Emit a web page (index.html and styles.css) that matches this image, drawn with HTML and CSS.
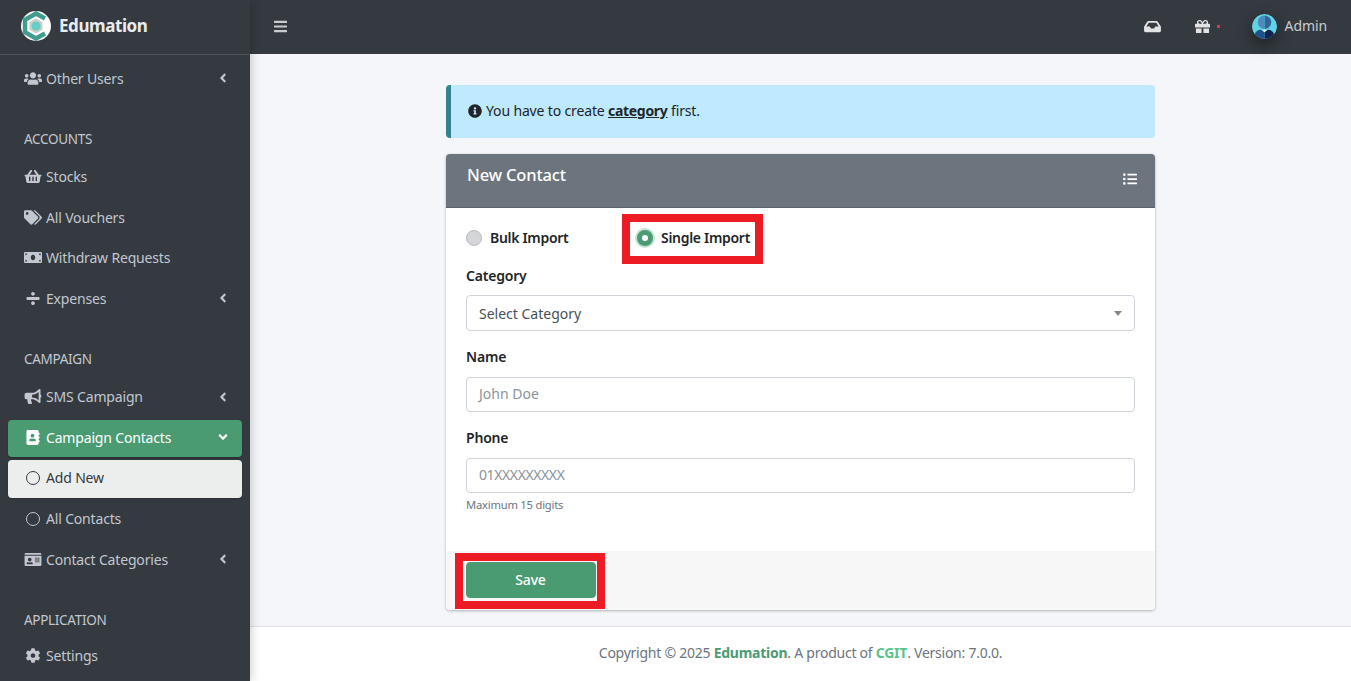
FILE: index.html
```html
<!DOCTYPE html>
<html lang="en">
<head>
<meta charset="utf-8">
<title>New Contact - Edumation</title>
<link rel="stylesheet" href="styles.css">
</head>
<body>
<svg class="defs" aria-hidden="true">
<symbol id="i-users" viewBox="0 0 640 512"><path d="M96 224c35.3 0 64-28.7 64-64s-28.7-64-64-64-64 28.7-64 64 28.7 64 64 64zm448 0c35.3 0 64-28.7 64-64s-28.7-64-64-64-64 28.7-64 64 28.7 64 64 64zm32 32h-64c-17.6 0-33.5 7.1-45.1 18.6 40.3 22.1 68.9 62 75.1 109.4h66c17.7 0 32-14.3 32-32v-32c0-35.3-28.7-64-64-64zm-256 0c61.9 0 112-50.1 112-112S381.9 32 320 32 208 82.1 208 144s50.1 112 112 112zm76.8 32h-8.3c-20.8 10-43.9 16-68.5 16s-47.6-6-68.5-16h-8.3C179.6 288 128 339.6 128 403.2V432c0 26.5 21.5 48 48 48h288c26.5 0 48-21.5 48-48v-28.8c0-63.6-51.6-115.2-115.2-115.2zm-223.7-13.4C161.5 263.1 145.6 256 128 256H64c-35.3 0-64 28.7-64 64v32c0 17.7 14.3 32 32 32h65.9c6.3-47.4 34.9-87.3 75.2-109.4z"/></symbol>
<symbol id="i-basket" viewBox="0 0 576 512"><path d="M576 216v16c0 13.255-10.745 24-24 24h-8l-26.113 182.788C514.509 462.435 494.257 480 470.37 480H105.63c-23.887 0-44.139-17.565-47.518-41.212L32 256h-8c-13.255 0-24-10.745-24-24v-16c0-13.255 10.745-24 24-24h67.341l106.78-146.821c10.395-14.292 30.407-17.453 44.701-7.058 14.293 10.395 17.453 30.408 7.058 44.701L170.477 192h235.046L326.12 82.821c-10.395-14.292-7.234-34.306 7.059-44.701 14.291-10.395 34.306-7.235 44.701 7.058L484.659 192H552c13.255 0 24 10.745 24 24zM312 392V280c0-13.255-10.745-24-24-24s-24 10.745-24 24v112c0 13.255 10.745 24 24 24s24-10.745 24-24zm112 0V280c0-13.255-10.745-24-24-24s-24 10.745-24 24v112c0 13.255 10.745 24 24 24s24-10.745 24-24zm-224 0V280c0-13.255-10.745-24-24-24s-24 10.745-24 24v112c0 13.255 10.745 24 24 24s24-10.745 24-24z"/></symbol>
<symbol id="i-tags" viewBox="0 0 640 512"><path d="M497.941 225.941L286.059 14.059A48 48 0 0 0 252.118 0H48C21.49 0 0 21.49 0 48v204.118a48 48 0 0 0 14.059 33.941l211.882 211.882c18.744 18.745 49.136 18.746 67.882 0l204.118-204.118c18.745-18.745 18.745-49.137 0-67.882zM112 160c-26.51 0-48-21.49-48-48s21.49-48 48-48 48 21.49 48 48-21.49 48-48 48zm513.941 133.823L421.823 497.941c-18.745 18.745-49.137 18.745-67.882 0l-.36-.36L527.64 323.522c16.999-16.999 26.36-39.6 26.36-63.64s-9.362-46.641-26.36-63.64L331.397 0h48.721a48 48 0 0 1 33.941 14.059l211.882 211.882c18.745 18.745 18.745 49.137 0 67.882z"/></symbol>
<symbol id="i-money" viewBox="0 0 640 512"><path d="M608 64H32C14.33 64 0 78.33 0 96v320c0 17.67 14.33 32 32 32h576c17.67 0 32-14.33 32-32V96c0-17.67-14.33-32-32-32zM48 400v-64c35.35 0 64 28.65 64 64H48zm0-224v-64h64c0 35.35-28.65 64-64 64zm272 176c-44.19 0-80-42.99-80-96 0-53.02 35.82-96 80-96s80 42.98 80 96c0 53.03-35.83 96-80 96zm272 48h-64c0-35.35 28.65-64 64-64v64zm0-224c-35.35 0-64-28.65-64-64h64v64z"/></symbol>
<symbol id="i-divide" viewBox="0 0 448 512"><path d="M224 352c-35.35 0-64 28.65-64 64s28.65 64 64 64 64-28.65 64-64-28.65-64-64-64zm0-192c35.35 0 64-28.65 64-64s-28.65-64-64-64-64 28.65-64 64 28.65 64 64 64zm192 48H32c-17.67 0-32 14.33-32 32v32c0 17.67 14.33 32 32 32h384c17.67 0 32-14.33 32-32v-32c0-17.67-14.33-32-32-32z"/></symbol>
<symbol id="i-bullhorn" viewBox="0 0 576 512"><path d="M576 240c0-23.63-12.95-44.04-32-55.12V32.01C544 23.26 537.02 0 512 0c-7.12 0-14.19 2.38-19.98 7.02l-85.03 68.03C364.28 109.19 310.66 128 256 128H64c-35.35 0-64 28.65-64 64v96c0 35.35 28.65 64 64 64h33.7c-1.39 10.48-2.18 21.14-2.18 32 0 39.77 9.26 77.35 25.56 110.94 5.19 10.69 16.52 17.06 28.4 17.06h74.28c26.05 0 41.69-29.84 25.9-50.56-16.4-21.52-26.15-48.36-26.15-77.44 0-11.11 1.62-21.79 4.41-32H256c54.66 0 108.28 18.81 150.98 52.95l85.03 68.03a32.023 32.023 0 0 0 19.98 7.02c24.92 0 32-22.78 32-32V295.13C563.05 284.04 576 263.63 576 240zm-96 141.42l-33.05-26.44C392.95 311.78 325.12 288 256 288v-96c69.12 0 136.95-23.78 190.95-66.98L480 98.58v282.84z"/></symbol>
<symbol id="i-book" viewBox="0 0 448 512"><path d="M436 160c6.6 0 12-5.4 12-12v-40c0-6.6-5.4-12-12-12h-20V48c0-26.5-21.5-48-48-48H48C21.5 0 0 21.5 0 48v416c0 26.5 21.5 48 48 48h320c26.5 0 48-21.5 48-48v-48h20c6.6 0 12-5.4 12-12v-40c0-6.6-5.4-12-12-12h-20v-64h20c6.6 0 12-5.4 12-12v-40c0-6.6-5.4-12-12-12h-20v-64h20zm-228-32c35.3 0 64 28.7 64 64s-28.7 64-64 64-64-28.7-64-64 28.7-64 64-64zm112 236.8c0 10.6-10 19.2-22.4 19.2H118.4C106 384 96 375.4 96 364.8v-19.2c0-31.8 30.1-57.6 67.2-57.6h5c12.3 5.1 25.7 8 39.8 8s27.6-2.9 39.8-8h5c37.1 0 67.2 25.8 67.2 57.6v19.2z"/></symbol>
<symbol id="i-card" viewBox="0 0 576 512"><path d="M528 32H48C21.5 32 0 53.5 0 80v16h576V80c0-26.5-21.5-48-48-48zM0 432c0 26.5 21.5 48 48 48h480c26.5 0 48-21.5 48-48V128H0v304zm352-232c0-4.4 3.6-8 8-8h144c4.4 0 8 3.6 8 8v16c0 4.4-3.6 8-8 8H360c-4.4 0-8-3.6-8-8v-16zm0 64c0-4.4 3.6-8 8-8h144c4.4 0 8 3.6 8 8v16c0 4.4-3.6 8-8 8H360c-4.4 0-8-3.6-8-8v-16zm0 64c0-4.4 3.6-8 8-8h144c4.4 0 8 3.6 8 8v16c0 4.4-3.6 8-8 8H360c-4.4 0-8-3.6-8-8v-16zM176 192c35.3 0 64 28.7 64 64s-28.7 64-64 64-64-28.7-64-64 28.7-64 64-64zM67.1 396.2C75.5 370.5 99.6 352 128 352h8.2c12.3 5.1 25.7 8 39.8 8s27.6-2.9 39.8-8h8.2c28.4 0 52.5 18.5 60.9 44.2 3.2 9.9-5.2 19.8-15.6 19.8H82.7c-10.4 0-18.8-10-15.6-19.8z"/></symbol>
<symbol id="i-cog" viewBox="0 0 512 512"><path d="M487.4 315.7l-42.6-24.6c4.3-23.2 4.3-47 0-70.2l42.6-24.6c4.9-2.8 7.1-8.6 5.5-14-11.1-35.6-30-67.8-54.7-94.6-3.8-4.1-10-5.1-14.8-2.3L380.8 110c-17.9-15.4-38.5-27.3-60.8-35.1V25.8c0-5.6-3.9-10.5-9.4-11.7-36.7-8.2-74.3-7.8-109.2 0-5.5 1.2-9.4 6.1-9.4 11.7V75c-22.2 7.9-42.8 19.8-60.8 35.1L88.7 85.5c-4.9-2.8-11-1.9-14.8 2.3-24.7 26.7-43.6 58.9-54.7 94.6-1.7 5.4.6 11.2 5.5 14L67.3 221c-4.3 23.2-4.3 47 0 70.2l-42.6 24.6c-4.9 2.8-7.1 8.6-5.5 14 11.1 35.6 30 67.8 54.7 94.6 3.8 4.1 10 5.1 14.8 2.3l42.6-24.6c17.9 15.4 38.5 27.3 60.8 35.1v49.2c0 5.6 3.9 10.5 9.4 11.7 36.7 8.2 74.3 7.8 109.2 0 5.5-1.2 9.4-6.1 9.4-11.7v-49.2c22.2-7.9 42.8-19.8 60.8-35.1l42.6 24.6c4.9 2.8 11 1.9 14.8-2.3 24.7-26.7 43.6-58.9 54.7-94.6 1.5-5.5-.7-11.3-5.6-14.1zM256 336c-44.1 0-80-35.9-80-80s35.9-80 80-80 80 35.9 80 80-35.9 80-80 80z"/></symbol>
<symbol id="i-bars" viewBox="0 0 448 512"><path d="M16 132h416c8.837 0 16-7.163 16-16V76c0-8.837-7.163-16-16-16H16C7.163 60 0 67.163 0 76v40c0 8.837 7.163 16 16 16zm0 160h416c8.837 0 16-7.163 16-16v-40c0-8.837-7.163-16-16-16H16c-8.837 0-16 7.163-16 16v40c0 8.837 7.163 16 16 16zm0 160h416c8.837 0 16-7.163 16-16v-40c0-8.837-7.163-16-16-16H16c-8.837 0-16 7.163-16 16v40c0 8.837 7.163 16 16 16z"/></symbol>
<symbol id="i-inbox" viewBox="0 0 576 512"><path d="M567.938 243.908L462.25 85.374A48.003 48.003 0 0 0 422.311 64H153.689a48 48 0 0 0-39.938 21.374L8.062 243.908A47.994 47.994 0 0 0 0 270.533V400c0 26.51 21.49 48 48 48h480c26.51 0 48-21.49 48-48V270.533a47.994 47.994 0 0 0-8.062-26.625zM162.252 128h251.497l85.333 128H376l-32 64H232l-32-64H76.918l85.334-128z"/></symbol>
<symbol id="i-gift" viewBox="0 0 512 512"><path d="M32 448c0 17.7 14.3 32 32 32h160V320H32v128zm256 32h160c17.7 0 32-14.3 32-32V320H288v160zm192-320h-42.1c6.2-12.1 10.1-25.5 10.1-40 0-48.5-39.5-88-88-88-41.6 0-68.5 21.3-103 68.3-34.5-47-61.4-68.3-103-68.3-48.5 0-88 39.5-88 88 0 14.5 3.8 27.9 10.1 40H32c-17.7 0-32 14.3-32 32v80c0 8.8 7.2 16 16 16h480c8.8 0 16-7.2 16-16v-80c0-17.7-14.3-32-32-32zm-326.1 0c-22.1 0-40-17.9-40-40s17.9-40 40-40c19.9 0 34.6 3.3 86.1 80h-86.1zm206.1 0h-86.1c51.4-76.5 65.7-80 86.1-80 22.1 0 40 17.9 40 40s-17.9 40-40 40z"/></symbol>
<symbol id="i-list" viewBox="0 0 512 512"><path d="M48 48a48 48 0 1 0 48 48 48 48 0 0 0-48-48zm0 160a48 48 0 1 0 48 48 48 48 0 0 0-48-48zm0 160a48 48 0 1 0 48 48 48 48 0 0 0-48-48zm448 16H176a16 16 0 0 0-16 16v32a16 16 0 0 0 16 16h320a16 16 0 0 0 16-16v-32a16 16 0 0 0-16-16zm0-320H176a16 16 0 0 0-16 16v32a16 16 0 0 0 16 16h320a16 16 0 0 0 16-16V80a16 16 0 0 0-16-16zm0 160H176a16 16 0 0 0-16 16v32a16 16 0 0 0 16 16h320a16 16 0 0 0 16-16v-32a16 16 0 0 0-16-16z"/></symbol>
<symbol id="i-info" viewBox="0 0 512 512"><path d="M256 8C119.043 8 8 119.083 8 256c0 136.997 111.043 248 248 248s248-111.003 248-248C504 119.083 392.957 8 256 8zm0 110c23.196 0 42 18.804 42 42s-18.804 42-42 42-42-18.804-42-42 18.804-42 42-42zm56 254c0 6.627-5.373 12-12 12h-88c-6.627 0-12-5.373-12-12v-24c0-6.627 5.373-12 12-12h12v-64h-12c-6.627 0-12-5.373-12-12v-24c0-6.627 5.373-12 12-12h64c6.627 0 12 5.373 12 12v100h12c6.627 0 12 5.373 12 12v24z"/></symbol>
<symbol id="i-left" viewBox="0 0 256 512"><path d="M31.7 239l136-136c9.4-9.4 24.6-9.4 33.9 0l22.6 22.6c9.4 9.4 9.4 24.6 0 33.9L127.9 256l96.4 96.4c9.4 9.4 9.4 24.6 0 33.9L201.7 409c-9.4 9.4-24.6 9.4-33.9 0l-136-136c-9.5-9.4-9.5-24.6-.1-34z"/></symbol>
<symbol id="i-down" viewBox="0 0 320 512"><path d="M143 352.3L7 216.3c-9.4-9.4-9.4-24.6 0-33.9l22.6-22.6c9.4-9.4 24.6-9.4 33.9 0l96.4 96.4 96.4-96.4c9.4-9.4 24.6-9.4 33.9 0l22.6 22.6c9.4 9.4 9.4 24.6 0 33.9l-136 136c-9.2 9.4-24.4 9.4-33.8 0z"/></symbol>
</svg>

<div class="app">
  <aside class="sidebar">
    <div class="brand">
      <svg class="logo" viewBox="0 0 30 30">
        <circle cx="15" cy="15" r="15" fill="#fff"/>
        <path d="M24 7.500L15 2.500 4 8.800v12.400l11 6.300 9-5" fill="none" stroke="#3f9d90" stroke-width="4.500"/>
        <path d="M15 7.500l6.500 3.750v7.500L15 22.500l-6.500-3.750v-7.500z" fill="#c9cfc4"/>
        <circle cx="15" cy="15" r="4.500" fill="#62cfc8"/>
      </svg>
      <span class="brand-name">Edumation</span>
    </div>
    <nav class="menu">
      <a class="item"><svg class="ico"><use href="#i-users"/></svg><span class="label">Other Users</span><svg class="caret"><use href="#i-left"/></svg></a>
      <div class="section">ACCOUNTS</div>
      <a class="item"><svg class="ico"><use href="#i-basket"/></svg><span class="label">Stocks</span></a>
      <a class="item"><svg class="ico"><use href="#i-tags"/></svg><span class="label">All Vouchers</span></a>
      <a class="item"><svg class="ico"><use href="#i-money"/></svg><span class="label">Withdraw Requests</span></a>
      <a class="item"><svg class="ico"><use href="#i-divide"/></svg><span class="label">Expenses</span><svg class="caret"><use href="#i-left"/></svg></a>
      <div class="section">CAMPAIGN</div>
      <a class="item"><svg class="ico"><use href="#i-bullhorn"/></svg><span class="label">SMS Campaign</span><svg class="caret"><use href="#i-left"/></svg></a>
      <a class="item item-active"><svg class="ico"><use href="#i-book"/></svg><span class="label">Campaign Contacts</span><svg class="caret caret-down"><use href="#i-down"/></svg></a>
      <a class="item item-current"><span class="ring"></span><span class="label">Add New</span></a>
      <a class="item"><span class="ring"></span><span class="label">All Contacts</span></a>
      <a class="item"><svg class="ico"><use href="#i-card"/></svg><span class="label">Contact Categories</span><svg class="caret"><use href="#i-left"/></svg></a>
      <div class="section section-last">APPLICATION</div>
      <a class="item"><svg class="ico"><use href="#i-cog"/></svg><span class="label">Settings</span></a>
    </nav>
  </aside>

  <div class="main">
    <header class="navbar">
      <svg class="nav-bars"><use href="#i-bars"/></svg>
      <div class="nav-right">
        <svg class="nav-inbox"><use href="#i-inbox"/></svg>
        <span class="nav-gift"><svg class="nav-gift-ico"><use href="#i-gift"/></svg><i class="dot"></i></span>
        <span class="user">
          <svg class="avatar" viewBox="0 0 26 26">
            <defs><clipPath id="av"><circle cx="13" cy="13" r="13"/></clipPath></defs>
            <circle cx="13" cy="13" r="13" fill="#62d3e6"/>
            <g clip-path="url(#av)">
              <path d="M13 1.500a7 7 0 0 1 0 14z" fill="#2f6699"/>
              <path d="M13 1.500a7 7 0 0 0 0 14z" fill="#5089bb"/>
              <path d="M13 26h10v-4c0-3.500-3-5.500-6.500-5.500L13 19z" fill="#10264f"/>
              <path d="M13 26H3v-4c0-3.500 3-5.500 6.500-5.500L13 19z" fill="#1f5289"/>
              <path d="M10.500 16.500h5L13 19z" fill="#e8f4f8"/>
            </g>
          </svg>
          <span class="user-name">Admin</span>
        </span>
      </div>
    </header>

    <main class="content">
      <div class="column">
        <div class="alert">
          <svg class="alert-ico"><use href="#i-info"/></svg>
          <span>You have to create <a class="alert-link">category</a> first.</span>
        </div>
        <section class="card">
          <div class="card-head">
            <h3 class="card-title">New Contact</h3>
            <svg class="card-tool"><use href="#i-list"/></svg>
          </div>
          <div class="card-body">
            <div class="radios">
              <label class="radio radio-bulk"><span class="dot-off"></span>Bulk Import</label>
              <label class="radio radio-single"><span class="dot-on"></span>Single Import</label>
            </div>
            <div class="group">
              <div class="field-label">Category</div>
              <div class="control select">Select Category<i class="arrow"></i></div>
            </div>
            <div class="group">
              <div class="field-label">Name</div>
              <div class="control placeholder">John Doe</div>
            </div>
            <div class="group">
              <div class="field-label">Phone</div>
              <div class="control placeholder phone">01XXXXXXXXX</div>
              <div class="help">Maximum 15 digits</div>
            </div>
          </div>
          <div class="card-foot">
            <button class="btn-save" type="button">Save</button>
          </div>
        </section>
      </div>
    </main>

    <footer class="footer">
      <span class="footer-text">Copyright © 2025 <b class="f-brand">Edumation</b>. A product of <b class="f-cgit">CGIT</b>. Version: 7.0.0.</span>
    </footer>
  </div>
</div>
</body>
</html>
```

FILE: styles.css
```css
* { box-sizing: border-box; }
html, body { margin: 0; height: 100%; overflow: hidden; }
body {
  font-family: "Noto Sans", "Open Sans", sans-serif;
  font-size: 14px;
  color: #212529;
  background: #f4f6f9;
}
.defs { display: none; }
.app { display: flex; height: 681px; }

/* Sidebar */
.sidebar {
  width: 250px;
  flex: none;
  background: #343a40;
  box-shadow: 0 0 10px rgba(0,0,0,.25);
  position: relative;
  z-index: 2;
  overflow: hidden;
}
.brand {
  height: 55px;
  display: flex;
  align-items: center;
  padding-left: 21px;
  gap: 8px;
  border-bottom: 1px solid #4b545c;
}
.logo { width: 30px; height: 30px; margin-top: -2px; }
.brand-name { font-size: 17px; font-weight: 700; letter-spacing: -.42px; color: #e9ecef; margin-top: -4px; }
.menu { padding: 5.500px 8px 0; }
.item {
  display: flex;
  align-items: center;
  height: 37.400px;
  margin-bottom: 3.300px;
  padding: 0 15px 2px 16px;
  border-radius: 4px;
  color: #c2c7d0;
  font-size: 14px;
  letter-spacing: -.17px;
}
.ico { width: 18px; height: 15px; fill: #c2c7d0; flex: none; }
.ring {
  width: 14px; height: 14px;
  margin: 0 2px;
  flex: none;
  border: 1.600px solid currentColor;
  border-radius: 50%;
}
.label { margin-left: 4px; flex: 1; white-space: nowrap; }
.caret { width: 8px; height: 14px; fill: #c2c7d0; flex: none; }
.section {
  padding: 28.600px 16px 9.900px;
  line-height: 19px;
  color: #c2c7d0;
  font-size: 13.500px;
  letter-spacing: -.3px;
}
.section-last { padding-bottom: 8.300px; }
.item-active { background: #4a9b72; color: #fff; box-shadow: 0 1px 2px rgba(0,0,0,.3); }
.item-active .ico, .item-active .caret { fill: #fff; }
.caret-down { width: 10px; margin-right: -1px; }
.item-current { background: #eceeed; color: #343a40; box-shadow: 0 1px 2px rgba(0,0,0,.2); }

/* Main */
.main { flex: 1; min-width: 0; display: flex; flex-direction: column; }
.navbar {
  height: 54px;
  flex: none;
  background: #343a40;
  display: flex;
  align-items: center;
  justify-content: space-between;
  padding: 0 24px;
}
.nav-bars { width: 13px; height: 15px; fill: #c9ccd0; margin-top: -1px; }
.nav-right { display: flex; align-items: center; }
.nav-inbox { width: 17px; height: 15px; fill: #e2e3e4; margin-right: 34px; margin-top: -2px; }
.nav-gift { display: flex; align-items: center; margin-right: 32px; margin-top: -2px; }
.nav-gift-ico { width: 15px; height: 15px; fill: #e2e3e4; }
.dot { width: 3px; height: 3px; background: #dc3545; margin-left: 7px; margin-top: 1px; }
.user { display: flex; align-items: center; gap: 8px; margin-top: -2px; }
.avatar { width: 25px; height: 25px; border-radius: 50%; box-shadow: 0 6px 16px rgba(0,0,0,.45); }
.user-name { color: #c9ccd0; font-size: 14px; letter-spacing: -.1px; margin-top: -1px; }

.content { flex: 1; min-height: 0; display: flex; justify-content: center; padding-top: 31px; }
.column { width: 709px; }

.alert {
  height: 53px;
  background: #bee9fe;
  border-left: 5px solid #358390;
  border-radius: 4px;
  display: flex;
  align-items: center;
  padding-left: 17px;
  gap: 4px;
  margin-bottom: 16px;
  color: #212529;
  letter-spacing: -.15px;
}
.alert span { margin-top: -2px; }
.alert-ico { width: 14px; height: 14px; fill: #212529; margin-top: -1px; }
.alert-link { font-weight: 700; text-decoration: underline; letter-spacing: -.3px; }

.card {
  height: 456px;
  background: #fff;
  border-radius: 4px;
  box-shadow: 0 0 1px rgba(0,0,0,.2), 0 1px 3px rgba(0,0,0,.25);
  display: flex;
  flex-direction: column;
}
.card-head {
  height: 54px;
  flex: none;
  background: #6c757d;
  border-bottom: 1px solid #5a6268;
  border-radius: 4px 4px 0 0;
  display: flex;
  justify-content: space-between;
  padding: 0 18px 0 21px;
}
.card-title { margin: 10px 0 0; font-size: 16.500px; font-weight: 500; line-height: 22px; letter-spacing: -.15px; color: #fff; }
.card-tool { width: 14px; height: 14px; fill: #fff; margin-top: 18px; }
.card-body { flex: 1; padding: 15px 20px 0; }
.radios { display: flex; height: 30px; align-items: center; margin-bottom: 13px; }
.radio { display: flex; align-items: center; font-weight: 600; gap: 8px; position: relative; letter-spacing: -.3px; margin-top: -1px; }
.radio-bulk { width: 168px; }
.radio-single::after {
  content: "";
  position: absolute;
  left: -12px; right: -13px; top: -14px; bottom: -17px;
  border: 8px solid #ed1c24;
  pointer-events: none;
}
.dot-off {
  width: 16px; height: 16px;
  border-radius: 50%;
  background: #d3d5d8;
  border: 1px solid #b9bcc0;
}
.dot-on {
  width: 16px; height: 16px;
  border-radius: 50%;
  background: #fff;
  border: 5px solid #4a9b72;
  box-shadow: 0 0 0 2px #c5e3d5;
  margin-left: 3px;
}
.group { margin-bottom: 16px; }
.field-label { font-weight: 600; line-height: 20px; margin-bottom: 10px; letter-spacing: -.2px; }
.control {
  height: 35px;
  border: 1px solid #ced4da;
  border-radius: 4px;
  padding: 0 12px;
  display: flex;
  align-items: center;
  color: #495057;
  position: relative;
}
.select { height: 36px; margin-top: -1px; }
.placeholder { color: #8c939a; padding-bottom: 2px; }
.phone { letter-spacing: -.4px; }
.arrow {
  position: absolute;
  right: 12px; top: 15px;
  border: 4px solid transparent;
  border-top: 5px solid #888;
  border-bottom: 0;
}
.help { font-size: 11.200px; letter-spacing: -.2px; color: #6c757d; margin-top: 3px; line-height: 18px; }

.card-foot {
  height: 59px;
  flex: none;
  background: #f7f7f7;
  border-radius: 0 0 4px 4px;
  padding: 11px 20px 0;
}
.btn-save {
  display: block;
  position: relative;
  width: 130px;
  height: 36px;
  padding: 0 1px 2px 0;
  background: #4a9b72;
  border: 1px solid #4a9b72;
  border-radius: 4px;
  color: #fff;
  font: 500 14px "Noto Sans", "Open Sans", sans-serif;
  letter-spacing: -.15px;
}
.btn-save::after {
  content: "";
  position: absolute;
  left: -12px; right: -10px; top: -10px; bottom: -12px;
  border: 8px solid #ed1c24;
  pointer-events: none;
}

.footer {
  height: 55px;
  flex: none;
  background: #fff;
  border-top: 1px solid #dee2e6;
  display: flex;
  align-items: center;
  justify-content: center;
  color: #6c757d;
  font-size: 14px;
  letter-spacing: -.25px;
}
.footer-text { margin-top: -3px; }
.f-brand { color: #4a9b72; font-weight: 700; }
.f-cgit { color: #58c48c; font-weight: 700; }
```
